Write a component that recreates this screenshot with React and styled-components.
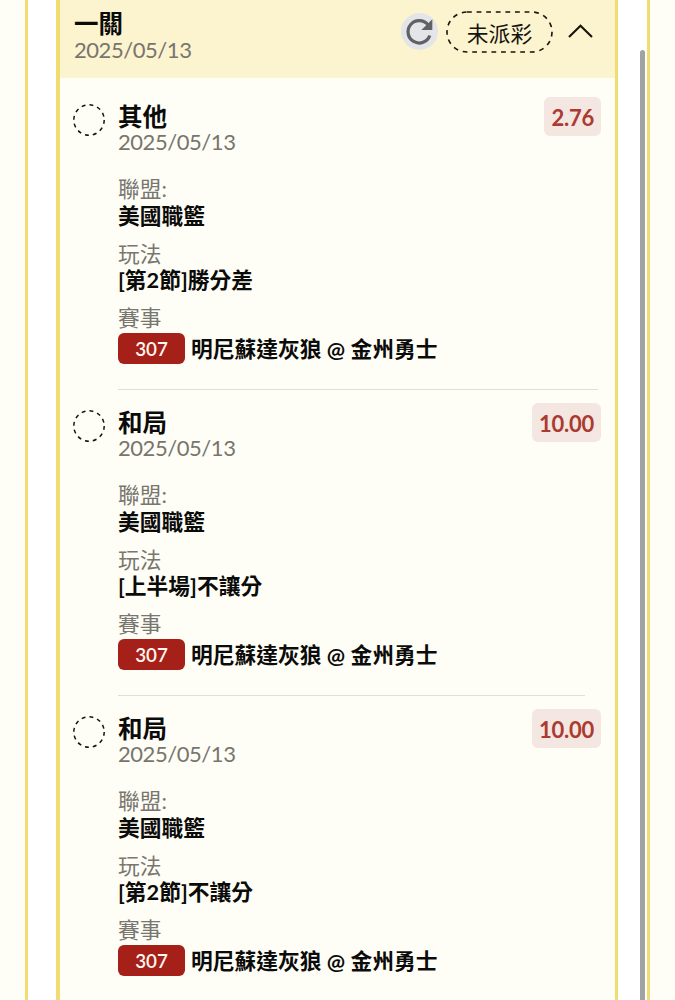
import React, { useState } from 'react';
import styled, { createGlobalStyle } from 'styled-components';

const BETS = [
    { id: 1, pick: '其他', date: '2025/05/13', odds: '2.76', play: '[第2節]勝分差', lineEnd: 17 },
    { id: 2, pick: '和局', date: '2025/05/13', odds: '10.00', play: '[上半場]不讓分', lineEnd: 30 },
    { id: 3, pick: '和局', date: '2025/05/13', odds: '10.00', play: '[第2節]不讓分', lineEnd: 30 },
];

const Bet = ({ bet }) => {
    return(
        <Item>
            <Circle viewBox="0 0 32 32">
                <circle cx="16" cy="16" r="15.2" />
            </Circle>
            <Detail $lineEnd={bet.lineEnd}>
                <Title>{bet.pick}</Title>
                <DateText>{bet.date}</DateText>
                <Field>
                    <Label>聯盟:</Label>
                    <Value>美國職籃</Value>
                </Field>
                <Field>
                    <Label>玩法</Label>
                    <Value>{bet.play}</Value>
                </Field>
                <Label>賽事</Label>
                <Match>
                    <MatchNo>307</MatchNo>
                    <Value>明尼蘇達灰狼 @ 金州勇士</Value>
                </Match>
            </Detail>
            <Odds>{bet.odds}</Odds>
        </Item>
    );
}

const App = () => {
    const [open, setOpen] = useState(true);

    function handleToggle(){
        setOpen(!open);
    }

    return(
        <Page>
            <GlobalStyle />
            <Outer>
                <Slip>
                    <Header>
                        <div>
                            <Title>一關</Title>
                            <DateText>2025/05/13</DateText>
                        </div>
                        <Actions>
                            <RefreshButton>
                                <svg width="37" height="37" viewBox="0 0 37 37">
                                    <path d="M27 11.8A11.2 11.2 0 1 0 28.8 22.5" fill="none" stroke="#606165" strokeWidth="3.2" />
                                    <path d="M31.3 6.2v10.8H20.4z" fill="#606165" />
                                </svg>
                            </RefreshButton>
                            <Status>
                                <StatusLine viewBox="0 0 107 42">
                                    <rect x="1" y="1" width="105" height="40" rx="20" />
                                </StatusLine>
                                未派彩
                            </Status>
                            <Toggle onClick={handleToggle} $open={open}>
                                <svg width="25" height="16" viewBox="0 0 25 16">
                                    <path d="M1 14L12.5 2.7 24 14" fill="none" stroke="#15140e" strokeWidth="2.1" />
                                </svg>
                            </Toggle>
                        </Actions>
                    </Header>
                    {open && (
                        <List>
                            {BETS.map(bet => <Bet key={bet.id} bet={bet} />)}
                        </List>
                    )}
                </Slip>
                <ScrollTrack>
                    <ScrollThumb />
                </ScrollTrack>
            </Outer>
        </Page>
    );
}

const GlobalStyle = createGlobalStyle`
    * {
        box-sizing: border-box;
    }

    body {
        margin: 0;
        overflow: hidden;
        background: #fffef6;
        font-family: Lato, "Noto Sans CJK TC", sans-serif;
    }
`;

const Page = styled.div`
    height: 1000px;
    padding: 0 25px;
    overflow: hidden;
    background: #fffef6;
`;

const Outer = styled.div`
    display: flex;
    height: 100%;
    padding-left: 28px;
    border: solid #f0dc70;
    border-width: 0 3px;
    background: #fff;
`;

const Slip = styled.div`
    width: 562px;
    flex-shrink: 0;
    border: solid #f0dc70;
    border-width: 0 3px 0 4px;
    background: #fffef6;
`;

const Header = styled.div`
    display: flex;
    justify-content: space-between;
    height: 78px;
    padding: 11px 22px 0 14px;
    background: #fcf3cf;
`;

const Title = styled.div`
    height: 26px;
    font-size: 24.5px;
    font-weight: 700;
    line-height: 26px;
    color: #0b0b0a;
`;

const DateText = styled.div`
    height: 25px;
    font-size: 22px;
    letter-spacing: -0.45px;
    line-height: 25px;
    color: #77756e;
`;

const Actions = styled.div`
    display: flex;
    align-items: center;
    height: 42px;
`;

const RefreshButton = styled.button`
    width: 37px;
    height: 37px;
    margin: -2px 8px 0 0;
    padding: 0;
    border: none;
    border-radius: 50%;
    background: #e4e5e8;
    cursor: pointer;

    svg {
        display: block;
    }
`;

const Status = styled.div`
    position: relative;
    width: 107px;
    height: 42px;
    font-size: 21.8px;
    line-height: 45px;
    text-align: center;
    color: #15140e;
`;

const StatusLine = styled.svg`
    position: absolute;
    inset: 0;
    fill: none;
    stroke: #15140e;
    stroke-width: 1.6;
    stroke-dasharray: 4.8 4.8;
`;

const Toggle = styled.button`
    display: flex;
    margin: -3px 0 0 15px;
    padding: 0;
    border: none;
    background: transparent;
    cursor: pointer;
    transform: ${props => (props.$open) ? 'none' : 'rotate(180deg)'};
`;

const List = styled.div`
    padding-top: 6px;
`;

const Item = styled.div`
    display: flex;
    position: relative;
    height: 306px;
    padding: 19px 0 0 13px;

    ${Title} {
        margin-top: 1px;
    }

    ${DateText} {
        line-height: 23px;
    }
`;

const Circle = styled.svg`
    width: 32px;
    height: 32px;
    margin: 1px 13px 0 0;
    flex-shrink: 0;
    fill: none;
    stroke: #15140e;
    stroke-width: 1.5;
    stroke-dasharray: 3.9 4.06;
`;

const Detail = styled.div`
    flex: 1;
    margin-right: ${props => props.$lineEnd}px;
    border-bottom: 1px solid #dedfda;
`;

const Label = styled.div`
    height: 27px;
    font-size: 21.7px;
    line-height: 28px;
    color: #77766f;
`;

const Value = styled.div`
    height: 27px;
    font-size: 21.75px;
    font-weight: 700;
    line-height: 27px;
    color: #0b0b0a;
    white-space: nowrap;
`;

const Field = styled.div`
    margin-bottom: 10px;

    ${DateText} + & {
        margin-top: 21px;
    }

    ${DateText} + & ${Label} {
        line-height: 27px;
    }

    ${DateText} + & ${Value} {
        line-height: 26px;
    }
`;

const Match = styled.div`
    display: flex;
    align-items: center;
    gap: 6px;
    margin-top: 2px;

    ${Value} {
        line-height: 28px;
    }
`;

const MatchNo = styled.div`
    width: 67px;
    height: 31px;
    border-radius: 6px;
    background: #a52018;
    font-size: 18.8px;
    font-weight: 600;
    line-height: 31px;
    text-align: center;
    color: #fff7ef;
`;

const Odds = styled.div`
    position: absolute;
    top: 13px;
    right: 14px;
    height: 39px;
    padding: 0 7px;
    border-radius: 6px;
    background: #f4e6e0;
    font-size: 22px;
    font-weight: 700;
    letter-spacing: -0.25px;
    line-height: 41px;
    color: #ab3a32;
`;

const ScrollTrack = styled.div`
    width: 29px;
    height: 100%;
    padding: 50px 2px 0 22px;
`;

const ScrollThumb = styled.div`
    width: 5px;
    height: 100%;
    border-radius: 3px 3px 0 0;
    background: #a0a3a3;
`;

export default App;
